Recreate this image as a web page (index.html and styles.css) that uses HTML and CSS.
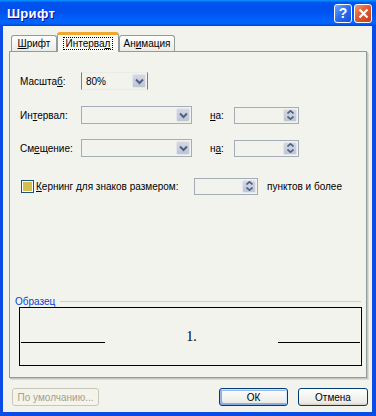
FILE: index.html
```html
<!DOCTYPE html>
<html lang="ru">
<head>
  <meta charset="UTF-8">
  <title>Шрифт</title>
  <link rel="stylesheet" href="styles.css">
</head>
<body>

<div class="window">
  <div class="titlebar">
    <span class="title">Шрифт</span>
    <div class="tb-btn help">?</div>
    <div class="tb-btn close">
      <svg width="11" height="11" viewBox="0 0 11 11"><path d="M1.5 1.5 L9.5 9.5 M9.5 1.5 L1.5 9.5" stroke="#fff" stroke-width="2.2"/></svg>
    </div>
  </div>

  <div class="frame">
    <div class="tabs">
      <div class="tab t-font"><u>Ш</u>рифт</div>
      <div class="tab active"><span class="focus">Интерва<u>л</u></span></div>
      <div class="tab t-anim">Ан<u>и</u>мация</div>
    </div>

    <div class="panel">
      <div class="row first">
        <span class="label">Масшта<u>б</u>:</span>
        <div class="combo enabled w-small">
          <span class="value">80%</span>
          <span class="drop">
            <svg width="9" height="7" viewBox="0 0 9 7"><path d="M1 1.5 L4.5 5 L8 1.5" fill="none" stroke="#4d6185" stroke-width="2"/></svg>
          </span>
        </div>
      </div>

      <div class="row r2">
        <span class="label">Ин<u>т</u>ервал:</span>
        <div class="combo w-big">
          <span class="value"></span>
          <span class="drop">
            <svg width="9" height="7" viewBox="0 0 9 7"><path d="M1 1.5 L4.5 5 L8 1.5" fill="none" stroke="#4d6185" stroke-width="2"/></svg>
          </span>
        </div>
        <span class="na"><u>н</u>а:</span>
        <div class="spin">
          <span class="value"></span>
          <span class="spin-btns">
            <span class="sb"><svg width="7" height="4" viewBox="0 0 7 4"><path d="M0.5 3.5 L3.5 0.8 L6.5 3.5" fill="none" stroke="#4d6185" stroke-width="1.6"/></svg></span>
            <span class="sb"><svg width="7" height="4" viewBox="0 0 7 4"><path d="M0.5 0.5 L3.5 3.2 L6.5 0.5" fill="none" stroke="#4d6185" stroke-width="1.6"/></svg></span>
          </span>
        </div>
      </div>

      <div class="row r3">
        <span class="label">См<u>е</u>щение:</span>
        <div class="combo w-big">
          <span class="value"></span>
          <span class="drop">
            <svg width="9" height="7" viewBox="0 0 9 7"><path d="M1 1.5 L4.5 5 L8 1.5" fill="none" stroke="#4d6185" stroke-width="2"/></svg>
          </span>
        </div>
        <span class="na">н<u>а</u>:</span>
        <div class="spin">
          <span class="value"></span>
          <span class="spin-btns">
            <span class="sb"><svg width="7" height="4" viewBox="0 0 7 4"><path d="M0.5 3.5 L3.5 0.8 L6.5 3.5" fill="none" stroke="#4d6185" stroke-width="1.6"/></svg></span>
            <span class="sb"><svg width="7" height="4" viewBox="0 0 7 4"><path d="M0.5 0.5 L3.5 3.2 L6.5 0.5" fill="none" stroke="#4d6185" stroke-width="1.6"/></svg></span>
          </span>
        </div>
      </div>

      <div class="row r4">
        <span class="check"><span class="check-fill"></span></span>
        <span class="kern-label"><u>К</u>ернинг для знаков размером:</span>
        <div class="spin w-kern">
          <span class="value"></span>
          <span class="spin-btns">
            <span class="sb"><svg width="7" height="4" viewBox="0 0 7 4"><path d="M0.5 3.5 L3.5 0.8 L6.5 3.5" fill="none" stroke="#4d6185" stroke-width="1.6"/></svg></span>
            <span class="sb"><svg width="7" height="4" viewBox="0 0 7 4"><path d="M0.5 0.5 L3.5 3.2 L6.5 0.5" fill="none" stroke="#4d6185" stroke-width="1.6"/></svg></span>
          </span>
        </div>
        <span class="after">пунктов и более</span>
      </div>

      <div class="sample-head">
        <span class="legend">Образец</span>
        <span class="legend-line"></span>
      </div>
      <div class="sample">
        <div class="preview">
          <span class="pline left"></span>
          <span class="ptext">1.</span>
          <span class="pline right"></span>
        </div>
      </div>
    </div>

    <div class="footer">
      <button class="btn disabled">По умолчанию...</button>
      <span class="spacer"></span>
      <button class="btn default">ОК</button>
      <button class="btn">Отмена</button>
    </div>
  </div>
</div>

</body>
</html>
```

FILE: styles.css
```css
* {
  box-sizing: border-box;
}
body {
  margin: 0;
  font-family: "Liberation Sans", Arial, sans-serif;
  font-size: 10px;
  color: #000;
  background: #fff;
}
.window {
  width: 376px;
  height: 416px;
  display: flex;
  flex-direction: column;
}

/* title bar */
.titlebar {
  height: 26px;
  display: flex;
  align-items: center;
  padding: 0 4px 0 7px;
  background: linear-gradient(to bottom, #0997ff 0%, #0053ee 10%, #0050ee 40%, #0066ff 85%, #0060f8 92%, #003dd7 100%);
}
.title {
  flex: 1;
  color: #fff;
  font-weight: bold;
  font-size: 13px;
  letter-spacing: 0.3px;
  text-shadow: 1px 1px 0 #0f1089;
}
.tb-btn {
  width: 18px;
  height: 19px;
  margin-left: 2px;
  border: 1px solid #fff;
  border-radius: 3px;
  display: flex;
  align-items: center;
  justify-content: center;
  color: #fff;
  font-weight: bold;
  font-size: 14px;
}
.help {
  background: linear-gradient(135deg, #6ea8ff 0%, #2a6cf0 50%, #1450d8 100%);
}
.close {
  background: linear-gradient(135deg, #f09878 0%, #e05a32 45%, #c73e1a 100%);
}

/* dialog body */
.frame {
  flex: 1;
  display: flex;
  flex-direction: column;
  background: #f3f3ee;
  border-left: 3px solid #0b4ce6;
  border-right: 4px solid #0b4ce6;
  border-bottom: 4px solid #0b4ce6;
  padding: 6px 5px 0 6px;
}

.tabs {
  height: 19px;
  display: flex;
  align-items: flex-end;
  padding-left: 2px;
  position: relative;
  z-index: 1;
}
.tab {
  height: 16px;
  padding-top: 2px;
  text-align: center;
  border: 1px solid #919b9c;
  border-bottom: none;
  border-radius: 3px 3px 0 0;
  background: linear-gradient(#fff, #ecebe6);
  white-space: nowrap;
}
.t-font {
  width: 46px;
}
.t-anim {
  width: 56px;
}
.tab.active {
  width: 62px;
  height: 20px;
  margin-bottom: -1px;
  padding-top: 3px;
  background: #f9f9f6;
  border-top: 3px solid #f0a830;
}
.focus {
  outline: 1px dotted #000;
  padding: 0 2px;
}

.panel {
  height: 327px;
  border: 1px solid #919b9c;
  box-shadow: 1px 1px 0 #c5c5bd, 2px 2px 0 #dcdcd5;
  padding: 20px 0 0 5px;
}

.row {
  display: flex;
  align-items: center;
  height: 18px;
  margin-left: 5px;
}
.r2 {
  margin-top: 16px;
}
.r3 {
  margin-top: 15px;
}
.r4 {
  margin-top: 20px;
}
.label {
  width: 61px;
}

.combo {
  height: 18px;
  display: flex;
  align-items: center;
  border: 1px solid #a5acb5;
  padding: 1px;
}
.combo.enabled {
  border-color: #ecece6 #7d7d7d;
}
.w-small {
  width: 67px;
}
.w-big {
  width: 111px;
}
.value {
  flex: 1;
  padding-left: 3px;
}
.drop {
  width: 14px;
  height: 14px;
  border: 1px solid #e2e6ee;
  border-radius: 2px;
  background: linear-gradient(#d3d8e2, #bec5d3);
  display: flex;
  align-items: center;
  justify-content: center;
}

.na {
  width: 24px;
  margin-left: 18px;
}
.spin {
  width: 65px;
  height: 17px;
  display: flex;
  border: 1px solid #a5acb5;
  padding: 1px;
}
.spin-btns {
  width: 14px;
  display: flex;
  flex-direction: column;
  border-radius: 2px;
  background: linear-gradient(#d3d8e2, #bec5d3);
  border: 1px solid #e2e6ee;
}
.sb {
  flex: 1;
  display: flex;
  align-items: center;
  justify-content: center;
}

.check {
  width: 13px;
  height: 13px;
  margin-left: 1px;
  border: 1px solid #1c5180;
  padding: 1px;
  background: #fff;
}
.check-fill {
  display: block;
  width: 100%;
  height: 100%;
  background: #d3c04c;
}
.kern-label {
  width: 158px;
  margin-left: 2px;
}
.w-kern {
  width: 64px;
}
.after {
  margin-left: 9px;
}

.sample-head {
  display: flex;
  align-items: center;
  margin-top: 100px;
  height: 12px;
  padding-right: 5px;
}
.legend {
  color: #0046d5;
}
.legend-line {
  flex: 1;
  margin-left: 5px;
  border-top: 1px solid #c8d0dc;
}
.sample {
  height: 59px;
  margin: 0 4px 0 4px;
  border: 1px solid #000;
}
.preview {
  height: 35px;
  display: flex;
  align-items: flex-end;
  padding: 0 1px;
}
.pline {
  border-bottom: 1px solid #000;
}
.pline.left {
  width: 84px;
}
.pline.right {
  width: 82px;
}
.ptext {
  flex: 1;
  text-align: center;
  font-family: "Liberation Serif", "Times New Roman", serif;
  font-size: 14px;
  line-height: 12px;
}

.footer {
  display: flex;
  margin-top: 10px;
  padding-left: 3px;
  margin-right: -1px;
}
.spacer {
  flex: 1;
}
.btn {
  height: 18px;
  width: 70px;
  margin-left: 10px;
  font-family: "Liberation Sans", Arial, sans-serif;
  font-size: 10px;
  color: #000;
  border: 1px solid #003c74;
  border-radius: 3px;
  background: linear-gradient(#fff, #ecebe6 85%, #d6d0c5);
  padding: 0;
}
.btn.default {
  width: 69px;
  box-shadow: inset -1px 1px #cee7ff, inset 1px 2px #98b8ea, inset 1px -1px #89ade4, inset 2px -2px #89ade4;
}
.btn.disabled {
  width: 87px;
  margin-left: 0;
  color: #a19f8f;
  border-color: #c9c7ba;
  background: #f5f4ea;
}
```
